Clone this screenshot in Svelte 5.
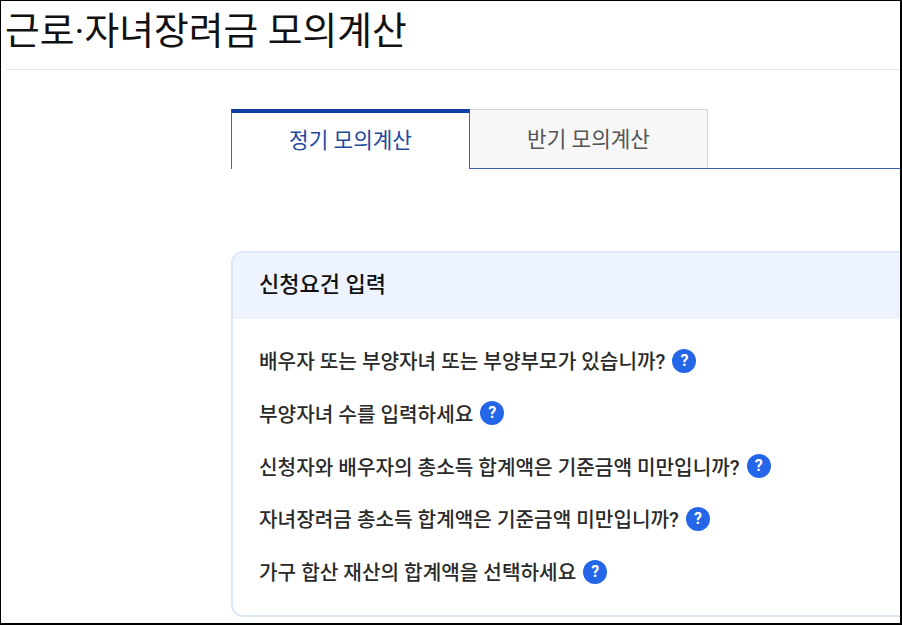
<script>
  const questions = [
    '배우자 또는 부양자녀 또는 부양부모가 있습니까?',
    '부양자녀 수를 입력하세요',
    '신청자와 배우자의 총소득 합계액은 기준금액 미만입니까?',
    '자녀장려금 총소득 합계액은 기준금액 미만입니까?',
    '가구 합산 재산의 합계액을 선택하세요'
  ];
</script>

<div class="frame">
  <header class="page-head">
    <h1>근로·자녀장려금 모의계산</h1>
  </header>

  <div class="content">
    <div class="tabs">
      <button class="tab active">정기 모의계산</button>
      <button class="tab">반기 모의계산</button>
    </div>

    <section class="card">
      <h2 class="card-title">신청요건 입력</h2>
      <ul class="questions">
        {#each questions as q}
          <li>
            <span>{q}</span>
            <span class="help">?</span>
          </li>
        {/each}
      </ul>
    </section>
  </div>
</div>

<style>
  :global(body) {
    background: #fff;
  }

  .frame {
    box-sizing: border-box;
    width: 902px;
    height: 625px;
    border: solid #000;
    border-width: 1px 2px 2px 1px;
    overflow: hidden;
    font-family: Roboto, "Noto Sans CJK KR", sans-serif;
    background: #fff;
  }

  .page-head {
    margin-left: 5px;
    height: 68px;
    border-bottom: 1px solid #e6e6e6;
  }

  h1 {
    margin: 0;
    margin-left: -1px;
    padding-top: 8px;
    font-size: 37.8px;
    line-height: 44px;
    font-weight: 400;
    color: #111;
    white-space: nowrap;
  }

  .content {
    margin-left: 230px;
    padding-top: 39px;
  }

  .tabs {
    display: flex;
    align-items: flex-start;
    height: 60px;
    box-sizing: border-box;
    border-bottom: 1px solid #3f63b5;
  }

  .tab {
    box-sizing: border-box;
    width: 238px;
    height: 59px;
    margin: 0;
    padding: 0 0 4px;
    font: inherit;
    font-size: 21.3px;
    color: #555;
    background: #f7f7f7;
    border: 1px solid #d2d2d2;
    border-left: 0;
    border-bottom: 0;
  }

  .tab.active {
    width: 239px;
    height: 60px;
    padding: 0 0 6px;
    color: #1f4a9e;
    background: #fff;
    border: 0;
    border-top: 4px solid #0f3fa6;
    border-left: 1px solid #3f63b5;
    border-right: 1px solid #3f63b5;
    position: relative;
  }

  .card {
    box-sizing: border-box;
    width: 760px;
    height: 366px;
    margin-top: 82px;
    border: 2px solid #dbe6f7;
    border-radius: 12px;
    overflow: hidden;
  }

  .card-title {
    margin: 0;
    height: 66px;
    padding-left: 26px;
    font-size: 22px;
    line-height: 63px;
    font-weight: 500;
    color: #111;
    background: #edf3ff;
  }

  .questions {
    list-style: none;
    margin: 0;
    padding: 29.5px 0 0 26px;
    display: flex;
    flex-direction: column;
    gap: 28.75px;
  }

  .questions li {
    display: flex;
    align-items: center;
    gap: 7px;
    height: 24px;
    font-size: 20.2px;
    font-weight: 500;
    color: #2a2a2a;
    white-space: nowrap;
  }

  .help {
    width: 24px;
    height: 24px;
    border-radius: 50%;
    background: #2566e8;
    color: #fff;
    font-size: 16px;
    font-weight: 700;
    line-height: 24px;
    text-align: center;
    flex-shrink: 0;
  }
</style>
